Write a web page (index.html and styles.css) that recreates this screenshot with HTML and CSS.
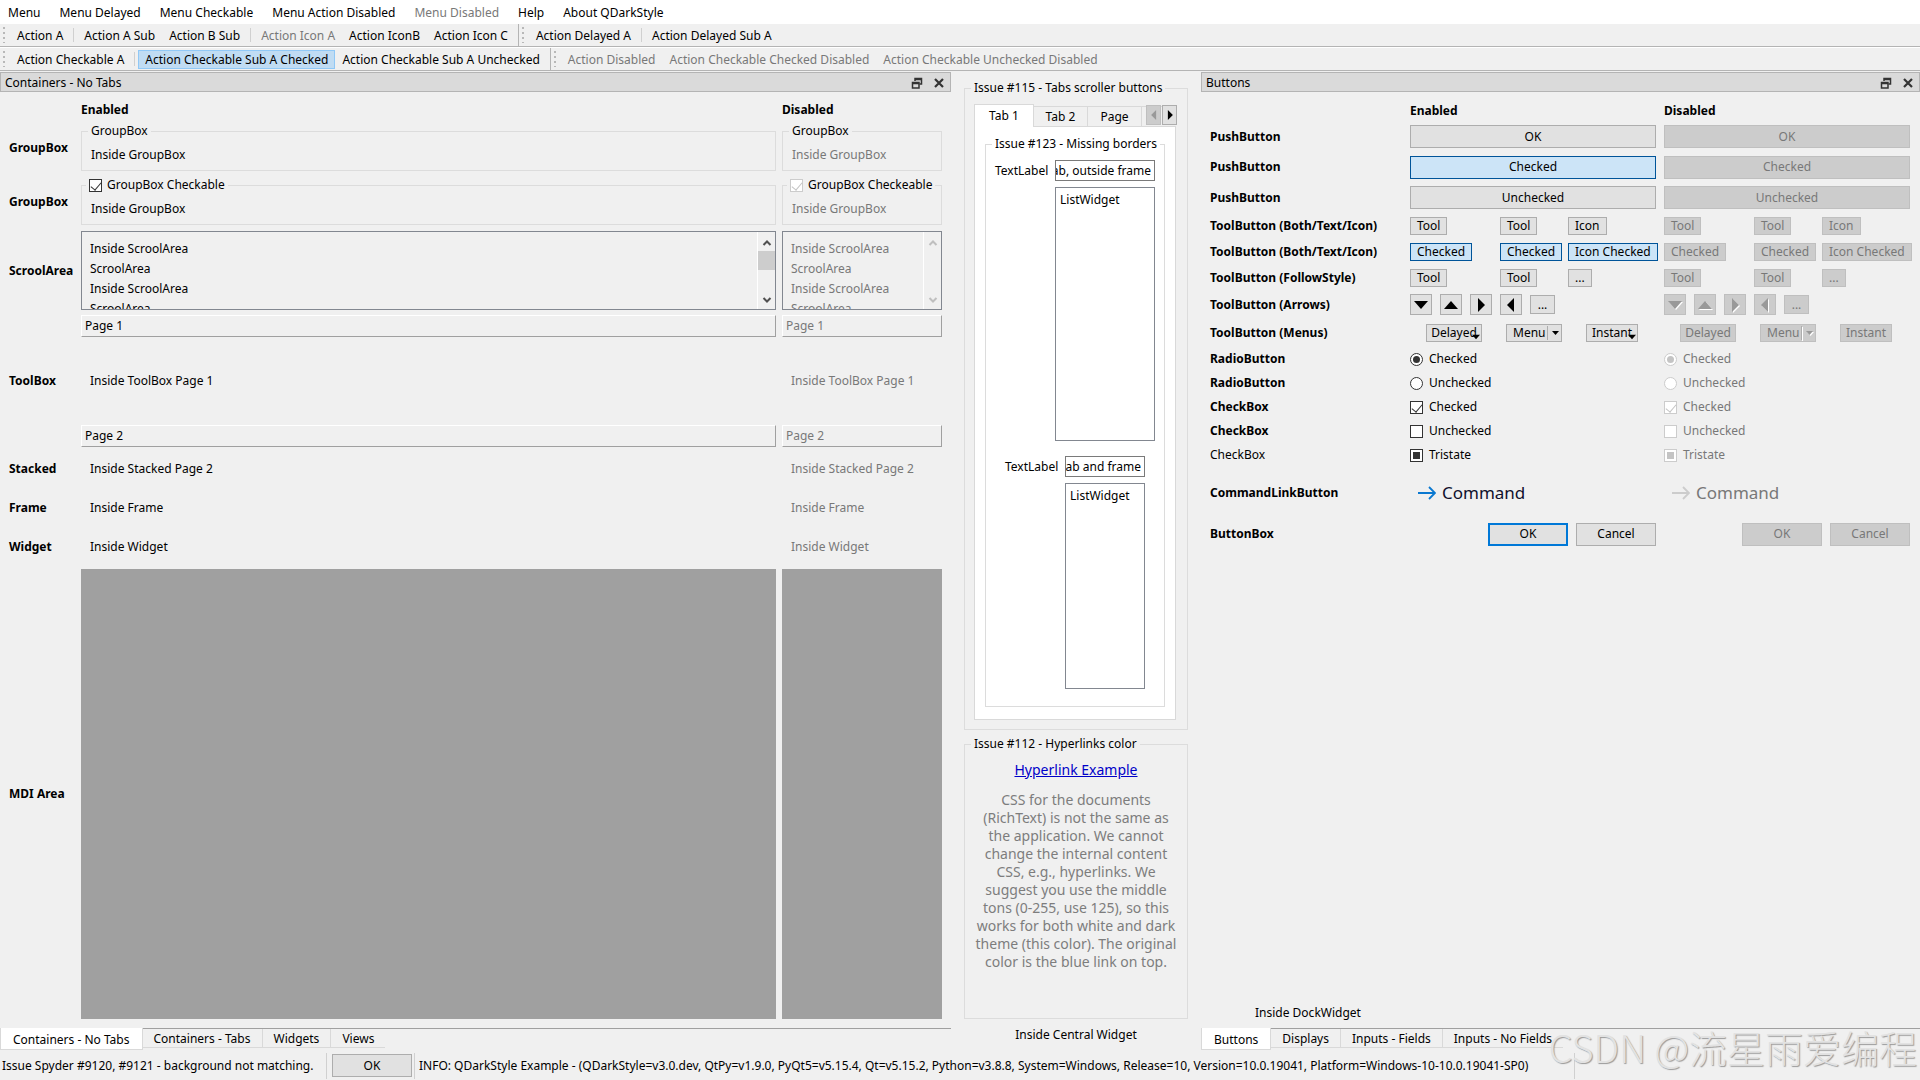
FILE: index.html
```html
<!DOCTYPE html>
<html lang="en">
<head>
<meta charset="utf-8">
<title>QDarkStyle Example</title>
<link rel="stylesheet" href="styles.css">
</head>
<body>
<svg class="defs" aria-hidden="true">
  <symbol id="float" viewBox="0 0 12 12"><path d="M4 4V1.500H10.500V7H8.500M4 2.500H10.500" fill="none" stroke="#333" stroke-width="1.500"/><path d="M1.500 5.500H8V11H1.500ZM1.500 6.500H8" fill="none" stroke="#333" stroke-width="1.500"/></symbol>
  <symbol id="close" viewBox="0 0 12 12"><path d="M2 2L10 10M10 2L2 10" stroke="#333" stroke-width="2.200"/></symbol>
  <symbol id="chev-up" viewBox="0 0 10 10"><path d="M1.500 7L5 3.500L8.500 7" fill="none" stroke="currentColor" stroke-width="2"/></symbol>
  <symbol id="chev-down" viewBox="0 0 10 10"><path d="M1.500 3L5 6.500L8.500 3" fill="none" stroke="currentColor" stroke-width="2"/></symbol>
  <symbol id="tri-down" viewBox="0 0 14 14"><path d="M0 3H14L7 11Z" fill="currentColor"/></symbol>
  <symbol id="tri-up" viewBox="0 0 14 14"><path d="M0 11H14L7 3Z" fill="currentColor"/></symbol>
  <symbol id="tri-right" viewBox="0 0 14 14"><path d="M4 0V14L11 7Z" fill="currentColor"/></symbol>
  <symbol id="tri-left" viewBox="0 0 14 14"><path d="M10 0V14L3 7Z" fill="currentColor"/></symbol>
  <symbol id="arrow" viewBox="0 0 18 14"><path d="M0 7H17M11 1L17 7L11 13" fill="none" stroke="currentColor" stroke-width="1.800"/></symbol>
</svg>

<nav class="menubar">
  <button>Menu</button><button>Menu Delayed</button><button>Menu Checkable</button><button>Menu Action Disabled</button><button disabled>Menu Disabled</button><button>Help</button><button>About QDarkStyle</button>
</nav>

<div class="toolrow">
  <div class="toolbar"><i class="grip"></i><button>Action A</button><i class="sep"></i><button>Action A Sub</button><button>Action B Sub</button><i class="sep"></i><button disabled>Action Icon A</button><button>Action IconB</button><button>Action Icon C</button></div>
  <div class="toolbar last"><i class="grip"></i><button>Action Delayed A</button><i class="sep"></i><button>Action Delayed Sub A</button></div>
</div>
<div class="toolrow">
  <div class="toolbar"><i class="grip"></i><button>Action Checkable A</button><i class="sep"></i><button class="on">Action Checkable Sub A Checked</button><button>Action Checkable Sub A Unchecked</button></div>
  <div class="toolbar last"><i class="grip"></i><button disabled>Action Disabled</button><button disabled>Action Checkable Checked Disabled</button><button disabled>Action Checkable Unchecked Disabled</button></div>
</div>

<main class="main">
  <section class="dock">
    <header class="dock-title"><span>Containers - No Tabs</span><button aria-label="Float"><svg><use href="#float"/></svg></button><button aria-label="Close"><svg><use href="#close"/></svg></button></header>
    <div class="containers">
      <b></b><b>Enabled</b><b>Disabled</b>

      <b>GroupBox</b>
      <fieldset class="group"><legend>GroupBox</legend><p>Inside GroupBox</p></fieldset>
      <fieldset class="group" disabled><legend>GroupBox</legend><p>Inside GroupBox</p></fieldset>

      <b>GroupBox</b>
      <fieldset class="group"><legend class="check"><label><input type="checkbox" checked>GroupBox Checkable</label></legend><p>Inside GroupBox</p></fieldset>
      <fieldset class="group" disabled><legend class="check"><label><input type="checkbox" checked disabled>GroupBox Checkeable</label></legend><p>Inside GroupBox</p></fieldset>

      <b>ScroolArea</b>
      <div class="scroll"><div class="lines"><p>Inside ScroolArea</p><p>ScroolArea</p><p>Inside ScroolArea</p><p>ScroolArea</p></div>
        <div class="bar"><svg><use href="#chev-up"/></svg><i></i><svg><use href="#chev-down"/></svg></div></div>
      <div class="scroll off"><div class="lines"><p>Inside ScroolArea</p><p>ScroolArea</p><p>Inside ScroolArea</p><p>ScroolArea</p></div>
        <div class="bar"><svg><use href="#chev-up"/></svg><svg><use href="#chev-down"/></svg></div></div>

      <b>ToolBox</b>
      <div class="toolbox"><button>Page 1</button><p>Inside ToolBox Page 1</p><button>Page 2</button></div>
      <div class="toolbox off"><button disabled>Page 1</button><p>Inside ToolBox Page 1</p><button disabled>Page 2</button></div>

      <b>Stacked</b><p class="inside">Inside Stacked Page 2</p><p class="inside off">Inside Stacked Page 2</p>
      <b>Frame</b><p class="inside">Inside Frame</p><p class="inside off">Inside Frame</p>
      <b>Widget</b><p class="inside">Inside Widget</p><p class="inside off">Inside Widget</p>
      <b>MDI Area</b><div class="mdi"></div><div class="mdi"></div>
    </div>
    <nav class="dock-tabs"><button class="active">Containers - No Tabs</button><button>Containers - Tabs</button><button>Widgets</button><button>Views</button></nav>
  </section>

  <section class="central">
    <fieldset class="group issue-tabs"><legend>Issue #115 - Tabs scroller buttons</legend>
      <div class="tabs">
        <button class="active">Tab 1</button><button>Tab 2</button><button>Page</button><span class="rest"></span>
        <span class="scroller"><button disabled aria-label="Previous tabs"><svg><use href="#tri-left"/></svg></button><button aria-label="Next tabs"><svg><use href="#tri-right"/></svg></button></span>
      </div>
      <div class="pane">
        <fieldset class="group borders"><legend>Issue #123 - Missing borders</legend>
          <div class="form">
            <label for="outside">TextLabel</label><input id="outside" type="text" value="ab, outside frame">
            <div class="list">ListWidget</div>
          </div>
          <div class="form inner">
            <label for="framed">TextLabel</label><input id="framed" type="text" value="tab and frame">
            <div class="list">ListWidget</div>
          </div>
        </fieldset>
      </div>
    </fieldset>
    <fieldset class="group issue-links"><legend>Issue #112 - Hyperlinks color</legend>
      <div class="rich">
        <a href="#">Hyperlink Example</a>
        <p>CSS for the documents<br>(RichText) is not the same as<br>the application. We cannot<br>change the internal content<br>CSS, e.g., hyperlinks. We<br>suggest you use the middle<br>tons (0-255, use 125), so this<br>works for both white and dark<br>theme (this color). The original<br>color is the blue link on top.</p>
      </div>
    </fieldset>
    <p class="caption">Inside Central Widget</p>
  </section>

  <section class="dock">
    <header class="dock-title"><span>Buttons</span><button aria-label="Float"><svg><use href="#float"/></svg></button><button aria-label="Close"><svg><use href="#close"/></svg></button></header>
    <div class="buttons">
      <b></b><b>Enabled</b><b>Disabled</b>
      <b>PushButton</b><button class="push">OK</button><button class="push" disabled>OK</button>
      <b>PushButton</b><button class="push on">Checked</button><button class="push" disabled>Checked</button>
      <b>PushButton</b><button class="push">Unchecked</button><button class="push" disabled>Unchecked</button>

      <b>ToolButton (Both/Text/Icon)</b>
      <div class="tools"><button>Tool</button><button>Tool</button><button>Icon</button></div>
      <div class="tools"><button disabled>Tool</button><button disabled>Tool</button><button disabled>Icon</button></div>
      <b>ToolButton (Both/Text/Icon)</b>
      <div class="tools"><button class="on">Checked</button><button class="on">Checked</button><button class="on">Icon Checked</button></div>
      <div class="tools"><button disabled>Checked</button><button disabled>Checked</button><button disabled>Icon Checked</button></div>
      <b>ToolButton (FollowStyle)</b>
      <div class="tools"><button>Tool</button><button>Tool</button><button>...</button></div>
      <div class="tools"><button disabled>Tool</button><button disabled>Tool</button><button disabled>...</button></div>

      <b>ToolButton (Arrows)</b>
      <div class="arrows"><button aria-label="Down"><svg><use href="#tri-down"/></svg></button><button aria-label="Up"><svg><use href="#tri-up"/></svg></button><button aria-label="Right"><svg><use href="#tri-right"/></svg></button><button aria-label="Left"><svg><use href="#tri-left"/></svg></button><button class="more">...</button></div>
      <div class="arrows"><button disabled aria-label="Down"><svg><use href="#tri-down"/></svg></button><button disabled aria-label="Up"><svg><use href="#tri-up"/></svg></button><button disabled aria-label="Right"><svg><use href="#tri-right"/></svg></button><button disabled aria-label="Left"><svg><use href="#tri-left"/></svg></button><button class="more" disabled>...</button></div>

      <b>ToolButton (Menus)</b>
      <div class="menus"><button>Delayed<svg class="corner"><use href="#tri-down"/></svg></button><button class="split">Menu<svg><use href="#tri-down"/></svg></button><button>Instant<svg class="corner"><use href="#tri-down"/></svg></button></div>
      <div class="menus"><button disabled>Delayed</button><button class="split" disabled>Menu<svg><use href="#tri-down"/></svg></button><button disabled>Instant</button></div>

      <b>RadioButton</b><label><input type="radio" name="r1" checked>Checked</label><label class="off"><input type="radio" name="r2" checked disabled>Checked</label>
      <b>RadioButton</b><label><input type="radio" name="r1">Unchecked</label><label class="off"><input type="radio" name="r2" disabled>Unchecked</label>
      <b>CheckBox</b><label><input type="checkbox" checked>Checked</label><label class="off"><input type="checkbox" checked disabled>Checked</label>
      <b>CheckBox</b><label><input type="checkbox">Unchecked</label><label class="off"><input type="checkbox" disabled>Unchecked</label>
      <span>CheckBox</span><label><input type="checkbox" class="tristate" checked>Tristate</label><label class="off"><input type="checkbox" class="tristate" checked disabled>Tristate</label>

      <b>CommandLinkButton</b>
      <button class="command"><svg><use href="#arrow"/></svg>Command</button>
      <button class="command" disabled><svg><use href="#arrow"/></svg>Command</button>

      <b>ButtonBox</b>
      <div class="box"><button class="push default">OK</button><button class="push">Cancel</button></div>
      <div class="box"><button class="push" disabled>OK</button><button class="push" disabled>Cancel</button></div>
    </div>
    <p class="dock-note">Inside DockWidget</p>
    <nav class="dock-tabs"><button class="active">Buttons</button><button>Displays</button><button>Inputs - Fields</button><button>Inputs - No Fields</button></nav>
  </section>
</main>

<footer class="status">
  <span>Issue Spyder #9120, #9121 - background not matching.</span>
  <button class="push">OK</button>
  <span class="info">INFO: QDarkStyle Example - (QDarkStyle=v3.0.dev, QtPy=v1.9.0, PyQt5=v5.15.4, Qt=v5.15.2, Python=v3.8.8, System=Windows, Release=10, Version=10.0.19041, Platform=Windows-10-10.0.19041-SP0)</span>
</footer>
<div class="watermark">CSDN @流星雨爱编程</div>
</body>
</html>
```
FILE: styles.css
```css
* { box-sizing: border-box; margin: 0; }
body {
  min-height: 100vh;
  display: flex;
  flex-direction: column;
  background: #f0f0f0;
  color: #000;
  font: 12px/16px "Noto Sans", sans-serif;
  white-space: nowrap;
}
button, input { font: inherit; color: inherit; }
button { padding: 0; border: 0; background: none; border-radius: 0; }
button:disabled, .off { color: #787878; }
.defs { display: none; }
svg { display: block; flex: none; }

/* menu bar and toolbars */
.menubar { display: flex; gap: 19px; height: 23px; padding: 2px 8px 0; background: #fff; }
.toolrow { display: flex; height: 24px; border-top: 1px solid #fff; border-bottom: 1px solid #b4b4b4; }
.toolbar { display: flex; align-items: center; padding: 0 3px; border-right: 1px solid #b4b4b4; }
.toolbar.last { border-right: 0; }
.toolbar button { height: 19px; padding: 0 6px; border: 1px solid transparent; line-height: 17px; }
.toolbar .on { background: #c0dcf3; border-color: #90c8f6; }
.grip { width: 4px; height: 16px; margin-right: 3px; background: repeating-linear-gradient(#b8b8b8 0 2px, transparent 2px 5px) no-repeat 0 0 / 2px 100%; }
.sep { width: 1px; height: 14px; margin: 0 3px; background: #d0d0d0; }

/* docks */
.main { flex: 1; display: grid; grid-template-columns: 951fr 250fr 719fr; padding-top: 1px; }
.dock, .central { display: flex; flex-direction: column; min-width: 0; }
.dock-title { display: flex; align-items: center; gap: 10px; height: 20px; padding: 1px 5px 0 4px; background: #dadada; border: 1px solid #b4b4b4; }
.dock-title span { flex: 1; }
.dock-title svg { width: 12px; height: 12px; }
.dock-tabs { display: flex; align-items: flex-start; height: 22px; border-top: 1px solid #a0a0a0; }
.dock-tabs button { height: 19px; padding: 1px 11px 0; border: solid #d9d9d9; border-width: 0 1px 1px 0; }
.dock-tabs button:last-child { border-right: 0; }
.dock-tabs .active { height: 22px; margin-top: -1px; padding: 2px 12px 0; background: #fff; border-left-width: 1px; }

/* group boxes */
.group { min-width: 0; padding: 0; border: 1px solid #dcdcdc; }
.group legend { margin-left: 6px; padding: 0 3px; line-height: 16px; }
.group:disabled p { color: #787878; }

/* containers page */
.containers {
  flex: 1;
  display: grid;
  grid-template-columns: 66px 695fr 160fr;
  grid-template-rows: 16px 50px 48px 79px 132px 34px 34px 34px 1fr;
  column-gap: 6px;
  row-gap: 5px;
  align-items: center;
  padding: 10px 9px 9px;
}
.containers .group { height: 48px; align-self: start; }
.containers .group p { margin-left: 9px; padding-top: 8px; }
.containers legend.check { margin-left: 4px; padding: 0 3px; }
.containers .group:has(.check) { margin-top: -1px; }
.containers label { display: flex; align-items: center; gap: 5px; }
.scroll { display: flex; height: 79px; border: 1px solid #828790; overflow: hidden; }
.lines { flex: 1; padding: 7px 8px 0; line-height: 20px; }
.bar { width: 18px; display: flex; flex-direction: column; align-items: center; border-left: 1px solid #fff; padding: 6px 0 4px; color: #505050; }
.bar svg { width: 10px; height: 10px; }
.bar svg:last-child { margin-top: auto; }
.bar i { width: 17px; height: 19px; margin-top: 3px; background: #cdcdcd; }
.off .bar { color: #bfbfbf; }
.toolbox { display: flex; flex-direction: column; height: 132px; }
.toolbox button { height: 22px; padding: 0 3px; text-align: left; border: 1px solid; border-color: #fff #a0a0a0 #a0a0a0 #fff; }
.toolbox p { flex: 1; display: flex; align-items: center; padding-left: 9px; }
.inside { padding-left: 9px; }
.mdi { align-self: stretch; background: #a0a0a0; }

/* check boxes and radio buttons */
input[type="checkbox"], input[type="radio"] { appearance: none; display: grid; place-items: center; flex: none; width: 13px; height: 13px; margin: 0; border: 1px solid #333; background: #fff; color: #333; }
input[type="radio"] { border-radius: 50%; }
input[type="radio"]:checked::after { content: ""; width: 7px; height: 7px; border-radius: 50%; background: currentColor; }
input[type="checkbox"]:checked::after { content: ""; width: 5px; height: 9px; margin-bottom: 2px; border: solid currentColor; border-width: 0 1px 1px 0; transform: rotate(40deg); }
input.tristate[type="checkbox"]:checked::after { width: 7px; height: 7px; margin: 0; border: 0; background: currentColor; transform: none; }
input[type]:disabled { border-color: #ccc; color: #c4c4c4; }

/* central widget */
.central { padding: 8px 13px 0; }
.issue-tabs { height: 650px; }
.issue-tabs > legend, .issue-links > legend { margin-left: 6px; }
.tabs { position: relative; display: flex; align-items: flex-end; height: 22px; margin: 8px 10px 0 9px; }
.tabs > button { height: 20px; width: 54px; border: 1px solid #d9d9d9; border-left: 0; border-bottom: 0; }
.tabs > .active { height: 23px; width: 60px; margin-bottom: -1px; background: #fff; border-left: 1px solid #d9d9d9; z-index: 1; }
.rest { flex: 1; height: 20px; border-top: 1px solid #d9d9d9; }
.scroller { position: absolute; right: 0; top: 1px; display: flex; gap: 1px; }
.scroller button { width: 15px; height: 20px; border: 1px solid #adadad; background: #e1e1e1; display: grid; place-items: center; }
.scroller button:disabled { background: #ccc; border-color: #bfbfbf; color: #999; }
.scroller svg { width: 10px; height: 10px; }
.pane { height: 594px; margin: 0 11px 0 9px; padding: 9px 10px 0; background: #fff; border: 1px solid #d9d9d9; }
.borders { height: 571px; padding: 8px 0 0; }
.form { display: grid; grid-template-columns: 54px 1fr; column-gap: 6px; row-gap: 6px; align-items: center; padding: 0 9px; }
.form input { width: 100%; min-width: 0; height: 21px; padding: 0 3px 0 0; border: 1px solid #7a7a7a; background: #fff; direction: rtl; }
.list { grid-column: 2; height: 254px; padding: 4px; border: 1px solid #828790; }
.form.inner { padding: 15px 19px 0; }
.inner .list { height: 206px; }
.issue-links { flex: 1; margin-top: 6px; }
.rich { text-align: center; font-size: 14px; line-height: 18px; }
.rich a { display: block; margin: 9px 0 12px; color: #0000c8; }
.rich p { color: #7d7d7d; }
.caption { height: 31px; padding-top: 8px; text-align: center; }

/* buttons page */
.buttons {
  display: grid;
  grid-template-columns: 192px 1fr 1fr;
  grid-template-rows: 20px 31px 30px 31px 26px 26px 26px 27px 29px 24px 24px 24px 24px 24px 52px 30px;
  column-gap: 8px;
  align-items: center;
  padding: 9px 10px 0 9px;
}
.push, .tools button, .arrows button, .menus button { background: #e1e1e1; border: 1px solid #adadad; }
.push { height: 23px; }
.on.push, .tools .on { background: #cce4f7; border-color: #005499; }
.push:disabled, .tools button:disabled, .arrows button:disabled, .menus button:disabled { background: #ccc; border-color: #bfbfbf; }
.tools { display: grid; grid-template-columns: 82px 60px 88px; column-gap: 8px; justify-items: start; }
.tools button { height: 18px; padding: 0 6px; line-height: 16px; }
.arrows { display: flex; align-items: center; gap: 8px; }
.arrows button { width: 22px; height: 21px; display: grid; place-items: center; }
.arrows .more { width: 25px; height: 19px; }
.arrows svg { width: 14px; height: 14px; }
.arrows button:disabled svg, .menus button:disabled svg { color: #999; filter: drop-shadow(1px 1px 0 #fff); }
.menus { display: flex; gap: 24px; padding-left: 16px; }
.menus button { position: relative; width: 56px; height: 18px; line-height: 16px; }
.menus button:last-child { width: 52px; }
.corner { position: absolute; right: 1px; bottom: 0; width: 8px; height: 8px; }
.menus .split { display: flex; align-items: center; justify-content: space-between; padding: 0 2px 0 6px; }
.split svg { width: 12px; height: 14px; padding: 3px 0 3px 4px; border-left: 1px solid #adadad; }
.buttons label { display: flex; align-items: center; gap: 6px; }
.command { display: flex; align-items: center; gap: 6px; padding-left: 8px; font-size: 17px; line-height: 24px; color: #10102c; }
.command svg { width: 18px; height: 18px; color: #0a78d0; }
.command:disabled { color: #787878; }
.command:disabled svg { color: #ccc; }
.box { display: flex; justify-content: flex-end; gap: 8px; }
.box .push { width: 80px; }
.push.default { border: 2px solid #0078d7; }
.dock-note { margin-top: auto; padding: 0 0 7px 54px; }

/* status bar */
.status { display: flex; align-items: center; height: 30px; padding: 1px 2px 0; }
.status span { min-width: 325px; height: 26px; line-height: 26px; border-right: 1px solid #d0d0d0; }
.status .push { width: 80px; margin: 0 2px 0 5px; }
.status .info { width: 1161px; padding-left: 4px; border-left: 1px solid #d0d0d0; }
.watermark { position: absolute; right: 3px; bottom: 9px; color: #e2e2e2; font: 300 38px/48px "Noto Sans CJK SC", sans-serif; text-shadow: 1px 1px 1px #999; }
```
